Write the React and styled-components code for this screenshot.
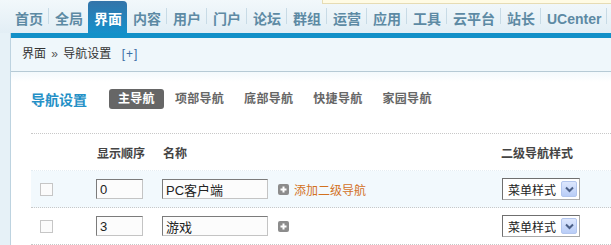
import React from "react"
import styled, { createGlobalStyle } from "styled-components"

const GlobalStyle = createGlobalStyle`
  html, body {
    margin: 0;
    padding: 0;
    background: #fff;
  }
  body {
    font: 12px "Liberation Sans", "Noto Sans CJK SC", sans-serif;
    color: #333;
    overflow: hidden;
  }
`

const menus = ["首页", "全局", "界面", "内容", "用户", "门户", "论坛", "群组", "运营", "应用", "工具", "云平台", "站长", "UCenter"]
const activeMenu = "界面"

const tabs = ["主导航", "项部导航", "底部导航", "快捷导航", "家园导航"]

const rows = [
  { order: "0", name: "PC客户端", canAdd: true, highlight: true },
  { order: "3", name: "游戏", canAdd: false },
]

const PlusIcon = () => (
  <svg width="11" height="11" viewBox="0 0 11 11">
    <rect x="0" y="0" width="11" height="11" rx="2" fill="#8c8c8c" />
    <path d="M5.5 2.5v6M2.5 5.5h6" stroke="#fff" strokeWidth="2" />
  </svg>
)

const Chevron = () => (
  <svg width="9" height="7" viewBox="0 0 9 7">
    <path d="M1 1.5l3.5 3.5L8 1.5" fill="none" stroke="#4b5f86" strokeWidth="2" />
  </svg>
)

export default function App() {
  return (
    <>
      <GlobalStyle />
      <Header>
        <Notice />
        {menus.map((m, i) => {
          const next = menus[i + 1]
          const showSep = m !== activeMenu && next !== activeMenu
          return (
            <React.Fragment key={m}>
              <MenuItem $active={m === activeMenu}>{m}</MenuItem>
              {showSep && <Sep />}
            </React.Fragment>
          )
        })}
      </Header>
      <Body>
        <LeftStrip />
        <Main>
          <BlueBar />
          <Crumb>
            界面 <Raquo>»</Raquo> 导航设置 <AddLink>[+]</AddLink>
          </Crumb>
          <Content>
            <TitleRow>
              <Title>导航设置</Title>
              {tabs.map((t, i) => (
                <Tab key={t} $active={i === 0}>{t}</Tab>
              ))}
            </TitleRow>
            <Table>
              <HeadRow>
                <Cell />
                <HeadCell>显示顺序</HeadCell>
                <HeadCell>名称</HeadCell>
                <HeadCell>二级导航样式</HeadCell>
              </HeadRow>
              {rows.map(r => (
                <Row key={r.name} $highlight={r.highlight}>
                  <Cell>
                    <Check />
                  </Cell>
                  <Cell>
                    <OrderInput readOnly value={r.order} />
                  </Cell>
                  <Cell>
                    <NameInput readOnly value={r.name} />
                    <AddSub>
                      <PlusIcon />
                      {r.canAdd && <AddText>添加二级导航</AddText>}
                    </AddSub>
                  </Cell>
                  <Cell>
                    <Select>
                      <span>菜单样式</span>
                      <SelectButton>
                        <Chevron />
                      </SelectButton>
                    </Select>
                  </Cell>
                </Row>
              ))}
            </Table>
          </Content>
        </Main>
      </Body>
    </>
  )
}

const Header = styled.div`
  position: relative;
  height: 33px;
  display: flex;
  align-items: flex-end;
  padding-left: 9px;
  overflow: hidden;
  background: linear-gradient(#f2f8fb, #e2eef5);
`

const Notice = styled.div`
  position: absolute;
  top: 0;
  left: 322px;
  right: 0;
  height: 3px;
  background: #fffbe4;
  border-bottom: 1px solid #e6dcb4;
  border-left: 1px solid #e6dcb4;
`

const MenuItem = styled.a`
  display: block;
  flex-shrink: 0;
  white-space: nowrap;
  height: 32px;
  line-height: 30px;
  padding: 3px 5px 0 6px;
  box-sizing: border-box;
  font-size: 14px;
  font-weight: bold;
  color: ${p => (p.$active ? "#fff" : "#5d8aa4")};
  background: ${p => (p.$active ? "linear-gradient(#3474a9, #1590cb)" : "transparent")};
  border-radius: 4px 4px 0 0;
  cursor: pointer;
`

const Sep = styled.span`
  flex-shrink: 0;
  width: 1px;
  height: 16px;
  margin-bottom: 9px;
  background: #c8dbe6;
`

const Body = styled.div`
  display: flex;
  min-height: 212px;
`

const LeftStrip = styled.div`
  width: 10px;
  flex-shrink: 0;
  background: #e6f1f7;
  border-right: 1px solid #bdd3e0;
`

const Main = styled.div`
  flex: 1;
  min-width: 0;
`

const BlueBar = styled.div`
  height: 5px;
  background: #1290c8;
`

const Crumb = styled.div`
  height: 33px;
  line-height: 33px;
  padding-left: 11px;
  background: #eff7fb;
  border-bottom: 1px solid #b6cad5;
  color: #333;
  font-size: 12px;
`

const Raquo = styled.span`
  color: #555;
  margin: 0 2px;
`

const AddLink = styled.span`
  color: #3a6ea5;
  margin-left: 7px;
  letter-spacing: 1px;
`

const Content = styled.div`
  padding: 17px 0 0 20px;
  background: linear-gradient(#f3f9fc, #fff 10px);
`

const TitleRow = styled.div`
  display: flex;
  align-items: center;
  height: 20px;
`

const Title = styled.h3`
  margin: 0 22px 0 0;
  font-size: 14px;
  font-weight: bold;
  color: #2490c6;
`

const Tab = styled.span`
  flex-shrink: 0;
  white-space: nowrap;
  height: 20px;
  line-height: 20px;
  padding: 0 9px;
  margin-right: 2px;
  border-radius: 3px;
  font-size: 12px;
  font-weight: bold;
  letter-spacing: 0.3px;
  color: ${p => (p.$active ? "#fff" : "#666")};
  background: ${p => (p.$active ? "#666" : "transparent")};
`

const Table = styled.div`
  margin-top: 24px;
  border-top: 1px dotted #c8c8c8;
`

const Row = styled.div`
  display: grid;
  grid-template-columns: 65px 66px 1fr 111px;
  align-items: center;
  height: 36px;
  border-bottom: 1px dotted #c8c8c8;
  background: ${p => (p.$highlight ? "#f2f9fd" : "#fff")};
`

const HeadRow = styled(Row)`
  border-bottom-color: #e3edf3;
`

const Cell = styled.div`
  display: flex;
  align-items: center;
`

const HeadCell = styled(Cell)`
  padding-left: 1px;
  padding-top: 1px;
  font-weight: bold;
  color: #444;
`

const Check = styled.span`
  width: 11px;
  height: 11px;
  margin-left: 9px;
  border: 1px solid #c6c6c6;
  background: #fbfbfb;
`

const TextInput = styled.input`
  height: 20px;
  box-sizing: border-box;
  padding: 0 3px;
  border: 1px solid;
  border-color: #7b7b7b #c4c4c4 #c4c4c4 #7b7b7b;
  background: #fcfcfc;
  font: 13px "Liberation Sans", "Noto Sans CJK SC", sans-serif;
  color: #222;
  outline: none;
`

const OrderInput = styled(TextInput)`
  width: 47px;
`

const NameInput = styled(TextInput)`
  width: 106px;
`

const AddSub = styled.span`
  display: flex;
  align-items: center;
  margin-left: 10px;
  gap: 5px;
`

const AddText = styled.span`
  color: #d2711f;
  font-size: 12px;
`

const Select = styled.div`
  display: flex;
  align-items: center;
  justify-content: space-between;
  width: 78px;
  height: 22px;
  box-sizing: border-box;
  margin-left: 2px;
  padding: 0 2px 0 5px;
  border: 1px solid;
  border-color: #6f6f6f #a9a9a9 #a9a9a9 #6f6f6f;
  background: #fff;
  font-size: 12px;
  color: #222;
`

const SelectButton = styled.span`
  display: flex;
  align-items: center;
  justify-content: center;
  width: 16px;
  height: 16px;
  box-sizing: border-box;
  border: 1px solid #b3c6ee;
  border-radius: 2px;
  background: linear-gradient(#dde7fd, #b9cdf7);
`
